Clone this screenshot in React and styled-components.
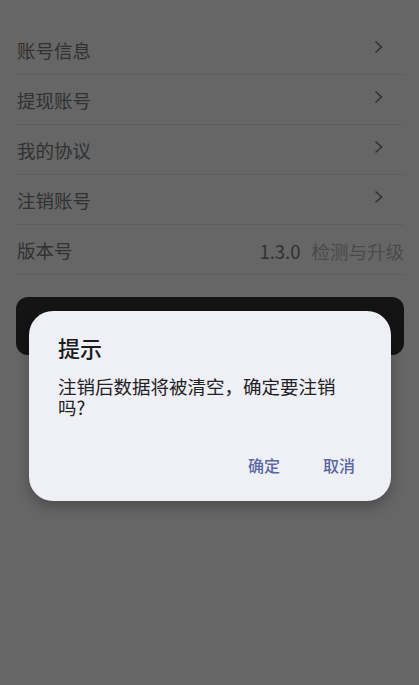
import React from "react";
import styled, { createGlobalStyle } from "styled-components";

const Global = createGlobalStyle`
  html, body { margin: 0; padding: 0; background: #ffffff; }
  body { font-family: "Noto Sans CJK SC", "Noto Sans", sans-serif; }
  * { box-sizing: border-box; }
`;

const Page = styled.div`
  position: relative;
  width: 419px;
  height: 685px;
  overflow: hidden;
  background: #ffffff;
  padding: 25px 15px 0 16px;
`;

const List = styled.div`
  display: flex;
  flex-direction: column;
`;

const Row = styled.div`
  display: flex;
  align-items: center;
  justify-content: space-between;
  height: 50px;
  padding-top: 2px;
  border-bottom: 1px solid #ececec;
`;

const Label = styled.span`
  font-size: 18.5px;
  color: #7a7a7a;
  line-height: 1;
  padding-left: 1px;
`;

const Chevron = styled.svg`
  width: 9px;
  height: 14px;
  margin-right: 21px;
  margin-bottom: 7px;
`;

const VersionBox = styled.div`
  display: flex;
  align-items: baseline;
  gap: 11px;
`;

const VersionNum = styled.span`
  font-size: 18.5px;
  color: #7a7a7a;
`;

const Upgrade = styled.span`
  font-size: 18.5px;
  color: #b8b8b8;
`;

const LogoutButton = styled.button`
  margin-top: 22px;
  width: 100%;
  height: 58px;
  border: none;
  border-radius: 12px;
  background: #333333;
  color: #ffffff;
  font-family: inherit;
  font-size: 18px;
`;

const Overlay = styled.div`
  position: absolute;
  inset: 0;
  background: rgba(0, 0, 0, 0.6);
  padding: 311px 28px 0 29px;
`;

const Dialog = styled.div`
  width: 362px;
  height: 190px;
  background: #efeff6;
  border-radius: 24px;
  box-shadow: 0 6px 14px rgba(0, 0, 0, 0.25);
  padding: 21px 0 0 29px;
  display: flex;
  flex-direction: column;
`;

const Title = styled.div`
  font-size: 22px;
  font-weight: 500;
  line-height: 30px;
  color: #1c1c1e;
`;

const Message = styled.div`
  margin-top: 14px;
  width: 290px;
  font-size: 18.5px;
  line-height: 21px;
  color: #222224;
`;

const Actions = styled.div`
  margin-top: auto;
  margin-bottom: 16px;
  padding-right: 28px;
  display: flex;
  justify-content: flex-end;
  gap: 27px;
`;

const ActionButton = styled.button`
  height: 40px;
  padding: 0 8px;
  border: none;
  background: transparent;
  font-family: inherit;
  font-size: 16px;
  font-weight: 500;
  color: #5a67a3;
`;

const ChevronIcon = () => (
  <Chevron viewBox="0 0 9 14">
    <polyline points="1.5,1.5 7.5,7 1.5,12.5" fill="none" stroke="#7a7a7a" strokeWidth="1.6" />
  </Chevron>
);

const items = ["账号信息", "提现账号", "我的协议", "注销账号"];

export default function App() {
  return (
    <>
      <Global />
      <Page>
        <List>
          {items.map((t) => (
            <Row key={t}>
              <Label>{t}</Label>
              <ChevronIcon />
            </Row>
          ))}
          <Row>
            <Label>版本号</Label>
            <VersionBox>
              <VersionNum>1.3.0</VersionNum>
              <Upgrade>检测与升级</Upgrade>
            </VersionBox>
          </Row>
        </List>
        <LogoutButton>退出登录</LogoutButton>
        <Overlay>
          <Dialog>
            <Title>提示</Title>
            <Message>注销后数据将被清空，确定要注销吗?</Message>
            <Actions>
              <ActionButton>确定</ActionButton>
              <ActionButton>取消</ActionButton>
            </Actions>
          </Dialog>
        </Overlay>
      </Page>
    </>
  );
}
